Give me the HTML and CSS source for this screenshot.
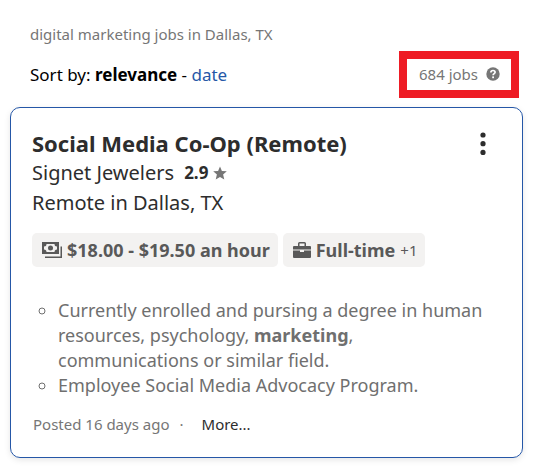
FILE: index.html
```html
<!DOCTYPE html>
<html lang="en">
<head>
    <meta charset="UTF-8">
    <meta name="viewport" content="width=device-width, initial-scale=1.0">
    <title>Digital Marketing Jobs in Dallas, TX</title>
    <link rel="stylesheet" href="styles.css">
</head>
<body>
    <header class="search-header">
        <p class="search-query">digital marketing jobs in Dallas, TX</p>
        <div class="sort-row">
            <p class="sort">Sort by: <strong>relevance</strong> - <a href="#">date</a></p>
            <div class="job-count">
                <span>684 jobs</span>
                <button class="help" type="button" aria-label="About the job count">
                    <svg width="14" height="14" viewBox="0 0 14 14">
                        <circle cx="7" cy="7" r="6.7" fill="#767676"/>
                        <path d="M4.9 5.4c0-1.200.9-1.900 2.100-1.900s2.100.7 2.100 1.800c0 1.400-2 1.400-2 3" fill="none" stroke="#fff" stroke-width="1.700"/>
                        <rect x="6.200" y="9.400" width="1.800" height="1.800" fill="#fff"/>
                    </svg>
                </button>
            </div>
        </div>
    </header>

    <main class="job-card">
        <div class="card-top">
            <h2 class="job-title">Social Media Co-Op (Remote)</h2>
            <button class="menu" type="button" aria-label="Job actions">
                <svg width="6" height="24" viewBox="0 0 6 24" fill="#2d2d2d">
                    <circle cx="3" cy="4" r="2.6"/>
                    <circle cx="3" cy="12.700" r="2.6"/>
                    <circle cx="3" cy="21.400" r="2.6"/>
                </svg>
            </button>
        </div>
        <div class="company">
            <span>Signet Jewelers</span>
            <span class="rating">2.9
                <svg width="14" height="14" viewBox="0 0 14 14" fill="#767676">
                    <path d="M7 .5l1.9 4.400 4.900.4-3.700 3.200 1.200 4.900L7 10.900l-4.300 2.500 1.200-4.900L.2 5.300l4.900-.4z"/>
                </svg>
            </span>
        </div>
        <div class="location">Remote in Dallas, TX</div>

        <div class="tags">
            <div class="tag">
                <svg width="20" height="16" viewBox="0 0 20 16">
                    <path d="M0 0h17v12H0z" fill="#595959"/>
                    <path d="M4.500 2h8a2.500 2.500 0 0 0 2.500 2.500v3a2.500 2.500 0 0 0-2.500 2.500h-8A2.500 2.500 0 0 0 2 7.500v-3A2.500 2.500 0 0 0 4.500 2z" fill="#f3f2f1"/>
                    <circle cx="8.500" cy="6" r="2.500" fill="#595959"/>
                    <path d="M18.500 4.500H20V16H3v-1.500h15.500z" fill="#595959"/>
                </svg>
                <span>$18.00 - $19.50 an hour</span>
            </div>
            <div class="tag">
                <svg width="18" height="16" viewBox="0 0 18 16" fill="#595959">
                    <path fill-rule="evenodd" d="M5 4V1.500Q5 0 6.500 0h5Q13 0 13 1.500V4h4q1 0 1 1v2.500H0V5q0-1 1-1zM6.500 4h5V1.500h-5z"/>
                    <path d="M0 8.500h7V10h4V8.500h7V15q0 1-1 1H1q-1 0-1-1z"/>
                </svg>
                <span>Full-time</span>
                <span class="extra">+1</span>
            </div>
        </div>

        <ul class="summary">
            <li>Currently enrolled and pursing a degree in human resources, psychology, <b>marketing</b>, communications or similar field.</li>
            <li>Employee Social Media Advocacy Program.</li>
        </ul>

        <div class="card-footer">
            <span>Posted 16 days ago</span>
            <span>·</span>
            <button class="more" type="button">More...</button>
        </div>
    </main>
</body>
</html>
```
FILE: styles.css
```css
* {
    margin: 0;
    padding: 0;
    box-sizing: border-box;
}

body {
    font-family: 'Noto Sans', sans-serif;
    font-size: 17px;
    background: #fff;
    color: #2d2d2d;
    padding: 24px 10px 8px;
}

button {
    font: inherit;
    color: inherit;
    background: none;
    border: none;
    cursor: pointer;
}

svg {
    display: block;
    flex-shrink: 0;
}

.search-header {
    padding: 0 4px 0 20px;
}

.search-query {
    font-size: 15px;
    line-height: 20px;
    color: #767676;
}

.sort-row {
    display: flex;
    align-items: center;
    justify-content: space-between;
    margin-top: 7px;
}

.sort {
    line-height: 24px;
    color: #000;
}

.sort a {
    color: #2557a7;
    text-decoration: none;
}

.job-count {
    display: flex;
    align-items: center;
    gap: 8px;
    padding: 5px 11px 6px 12px;
    border: 8px solid #ee1c25;
    font-size: 15px;
    line-height: 20px;
    color: #767676;
}

.job-card {
    margin-top: 9px;
    padding: 20px 21px 23px;
    border: 1px solid #2557a7;
    border-radius: 10px;
    box-shadow: 0 2px 6px rgba(0, 0, 0, 0.1);
}

.card-top {
    display: flex;
    align-items: center;
    justify-content: space-between;
    padding-right: 15px;
}

.job-title {
    font-size: 22px;
    line-height: 30px;
}

.company {
    display: flex;
    align-items: center;
    gap: 10px;
    font-size: 20px;
    line-height: 30px;
}

.rating {
    display: flex;
    align-items: center;
    gap: 5px;
    font-size: 17px;
    font-weight: bold;
}

.location {
    font-size: 20px;
    line-height: 30px;
}

.tags {
    display: flex;
    flex-wrap: wrap;
    gap: 5px;
    margin-top: 15px;
}

.tag {
    display: flex;
    align-items: center;
    gap: 5px;
    padding: 0 8px 0 10px;
    border-radius: 5px;
    background: #f3f2f1;
    color: #595959;
    font-size: 18px;
    font-weight: bold;
    line-height: 34px;
}

.extra {
    font-size: 15px;
    font-weight: normal;
}

.summary {
    margin-top: 31px;
    padding: 0 16px 0 26px;
    list-style: circle;
    font-size: 18px;
    line-height: 25px;
    color: #6f6f6f;
}

.card-footer {
    display: flex;
    gap: 10px;
    margin-top: 16px;
    padding-left: 1px;
    font-size: 15px;
    line-height: 20px;
    color: #767676;
}

.more {
    margin-left: 8px;
    color: #2d2d2d;
}
```
